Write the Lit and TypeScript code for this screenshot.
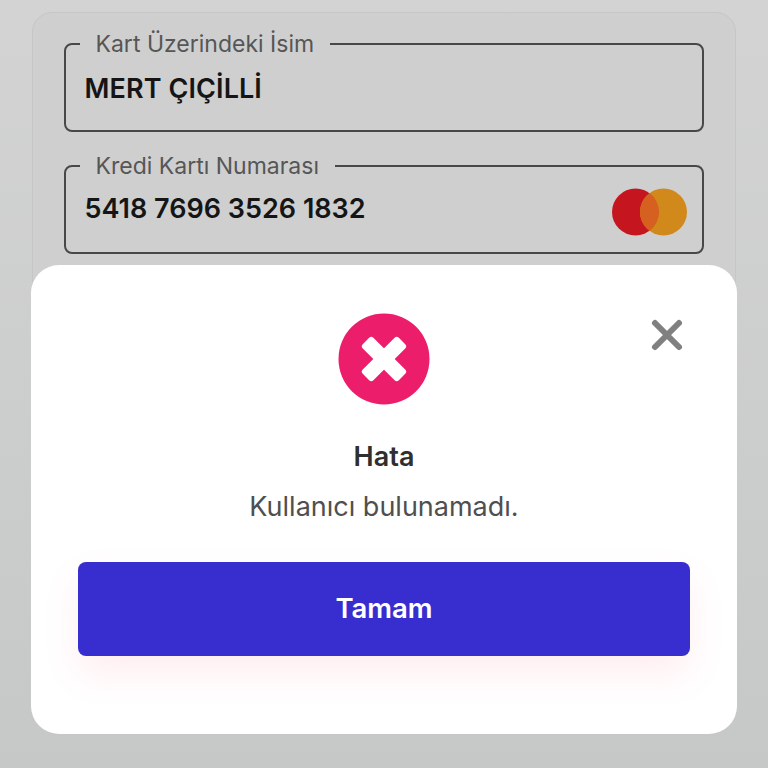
import { LitElement, html, css } from "lit";
import { customElement } from "lit/decorators.js";

@customElement("app-root")
export class AppRoot extends LitElement {
  static styles = css`
    :host {
      display: block;
      position: relative;
      width: 768px;
      height: 768px;
      overflow: hidden;
      box-sizing: border-box;
      padding: 12px 32px 0;
      background: linear-gradient(180deg, #d3d3d3 0%, #c6c8c8 100%);
      font-family: Inter, "Liberation Sans", sans-serif;
    }
    .card {
      box-sizing: border-box;
      height: 500px;
      padding: 18px 31px 0;
      background: #cfcfcf;
      border: 1.5px solid #c6c6c6;
      border-radius: 20px;
      display: flex;
      flex-direction: column;
      gap: 21px;
    }
    fieldset {
      margin: 0;
      height: 101px;
      box-sizing: border-box;
      border: 2px solid #484848;
      border-radius: 8px;
      padding: 0 15px 0 18.5px;
      display: flex;
      align-items: flex-start;
      justify-content: space-between;
    }
    legend {
      margin-left: -5px;
      padding: 0 16px;
      font-size: 23px;
      line-height: 26px;
      color: #565656;
    }
    .value {
      font-size: 27px;
      line-height: 32px;
      font-weight: 600;
      color: #151515;
      margin-top: 14px;
    }
    .name {
      margin-top: 16px;
      letter-spacing: 0.1px;
    }
    .mc {
      margin-top: 8px;
      display: block;
    }
    .modal {
      position: absolute;
      left: 31px;
      top: 265px;
      width: 706px;
      height: 469px;
      box-sizing: border-box;
      background: #fff;
      border-radius: 28px;
      padding: 48px 47px 0;
      display: flex;
      flex-direction: column;
      align-items: center;
    }
    .close {
      position: absolute;
      left: 618px;
      top: 52px;
      display: block;
    }
    .badge {
      display: block;
    }
    .title {
      margin-top: 35px;
      font-size: 27px;
      line-height: 34px;
      font-weight: 600;
      color: #2f2f2f;
    }
    .msg {
      margin-top: 17px;
      font-size: 27px;
      line-height: 32px;
      color: #4f4f4f;
    }
    .btn {
      margin-top: 39px;
      width: 612px;
      height: 94px;
      padding: 0 0 2px;
      border: 0;
      border-radius: 8px;
      background: #382dcf;
      color: #fff;
      font: 600 27.5px/32px Inter, "Liberation Sans", sans-serif;
      box-shadow: 0 18px 36px rgba(255, 90, 110, 0.1);
    }
  `;

  render() {
    return html`
      <div class="card">
        <fieldset>
          <legend>Kart Üzerindeki İsim</legend>
          <div class="value name">MERT ÇIÇİLLİ</div>
        </fieldset>
        <fieldset>
          <legend>Kredi Kartı Numarası</legend>
          <div class="value">5418 7696 3526 1832</div>
          <svg class="mc" width="76" height="50" viewBox="0 0 76 50">
            <circle cx="24.5" cy="25" r="23.5" fill="#c5161f"></circle>
            <circle cx="52.5" cy="25" r="23.5" fill="#d0891a"></circle>
            <path d="M38.5 6.1a23.5 23.5 0 0 1 0 37.8a23.5 23.5 0 0 1 0-37.8z" fill="#d5601f"></path>
          </svg>
        </fieldset>
      </div>
      <div class="modal">
        <svg class="close" width="36" height="36" viewBox="0 0 36 36">
          <path d="M6 6 30 30M30 6 6 30" stroke="#808080" stroke-width="6" stroke-linecap="round"></path>
        </svg>
        <svg class="badge" width="92" height="92" viewBox="0 0 92 92">
          <circle cx="46" cy="46" r="45.5" fill="#ec1d6b"></circle>
          <g fill="#fff" transform="rotate(45 46 46)">
            <rect x="20.5" y="38.5" width="51" height="15" rx="3"></rect>
            <rect x="38.5" y="20.5" width="15" height="51" rx="3"></rect>
          </g>
        </svg>
        <div class="title">Hata</div>
        <div class="msg">Kullanıcı bulunamadı.</div>
        <button class="btn">Tamam</button>
      </div>
    `;
  }
}
